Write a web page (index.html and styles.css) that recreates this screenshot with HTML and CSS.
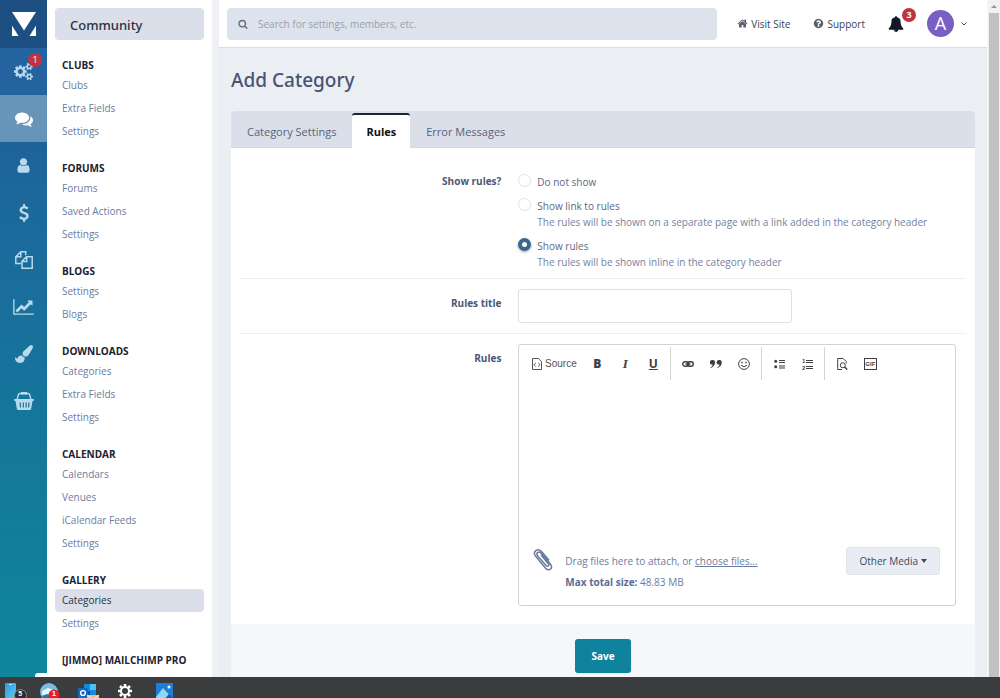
FILE: index.html
```html
<!DOCTYPE html>
<html lang="en">
<head>
<meta charset="utf-8">
<title>Add Category</title>
<link rel="stylesheet" href="styles.css">
</head>
<body>
<div class="app">
  <nav class="rail" aria-label="Sections">
    <a class="rail-logo" href="#" aria-label="Home"><svg width="24" height="24" viewBox="0 0 24 24"><path d="M0 0h24L12 18.500z"/><path d="M0 13.500L6.500 24H0zM24 13.500L17.500 24H24z"/></svg></a>
    <a class="rail-item rail-system" href="#" aria-label="System"><svg width="19" height="19" viewBox="0 0 1920 1792"><path d="M896 896q0-106-75-181t-181-75-181 75-75 181 75 181 181 75 181-75 75-181zm768 512q0-52-38-90t-90-38-90 38-38 90q0 53 37.500 90.500t90.500 37.500 90.500-37.500 37.500-90.500zm0-1024q0-52-38-90t-90-38-90 38-38 90q0 53 37.500 90.500t90.500 37.500 90.500-37.500 37.500-90.500zm-384 421v185q0 10-7 19.500t-16 10.500l-155 24q-11 35-32 76 34 48 90 115 7 11 7 20 0 12-7 19-23 30-82.500 89.500t-78.500 59.500q-11 0-21-7l-115-90q-37 19-77 31-11 108-23 155-7 24-30 24h-186q-11 0-20-7.500t-10-17.500l-23-153q-34-10-75-31l-118 89q-7 7-20 7-11 0-21-8-144-133-144-160 0-9 7-19 10-14 41-53t47-61q-23-44-35-82l-152-24q-10-1-17-9.500t-7-19.500v-185q0-10 7-19.500t16-10.500l155-24q11-35 32-76-34-48-90-115-7-11-7-20 0-12 7-20 22-30 82-89t79-59q11 0 21 7l115 90q34-18 77-32 11-108 23-154 7-24 30-24h186q11 0 20 7.500t10 17.500l23 153q34 10 75 31l118-89q8-7 20-7 11 0 21 8 144 133 144 160 0 8-7 19-12 16-42 54t-45 60q23 48 34 82l152 23q10 2 17 10.500t7 19.500zm640 533v140q0 16-149 31-12 27-30 52 51 113 51 138 0 4-4 7-122 71-124 71-8 0-46-47t-52-68q-20 2-30 2t-30-2q-14 21-52 68t-46 47q-2 0-124-71-4-3-4-7 0-25 51-138-18-25-30-52-149-15-149-31v-140q0-16 149-31 13-29 30-52-51-113-51-138 0-4 4-7 4-2 35-20t59-34 30-16q8 0 46 46.500t52 67.500q20-2 30-2t30 2q51-71 92-112l6-2q4 0 124 70 4 3 4 7 0 25-51 138 17 23 30 52 149 15 149 31zm0-1024v140q0 16-149 31-12 27-30 52 51 113 51 138 0 4-4 7-122 71-124 71-8 0-46-47t-52-68q-20 2-30 2t-30-2q-14 21-52 68t-46 47q-2 0-124-71-4-3-4-7 0-25 51-138-18-25-30-52-149-15-149-31v-140q0-16 149-31 13-29 30-52-51-113-51-138 0-4 4-7 4-2 35-20t59-34 30-16q8 0 46 46.500t52 67.500q20-2 30-2t30 2q51-71 92-112l6-2q4 0 124 70 4 3 4 7 0 25-51 138 17 23 30 52 149 15 149 31z"/></svg><span class="badge badge-rail">1</span></a>
    <a class="rail-item is-active" href="#" aria-label="Community"><svg width="18" height="18" viewBox="0 0 1792 1792"><path d="M1408 768q0 139-94 257t-256.500 186.500-353.500 68.500q-86 0-176-16-124 88-278 128-36 9-86 16h-3q-11 0-20.500-8t-11.500-21q-1-3-1-6.500t.5-6.500 2-6l2.500-5 3.500-5.500 4-5 4.500-5 4-4.500q5-6 23-25t26-29.500 22.500-29 25-38.500 20.500-44q-124-72-195-177t-71-224q0-139 94-257t256.500-186.500 353.500-68.500 353.500 68.500 256.500 186.500 94 257zm384 256q0 120-71 224.500t-195 176.500q10 24 20.500 44t25 38.500 22.500 29 26 29.500 23 25q1 1 4 4.500t4.500 5 4 5 3.500 5.500l2.500 5 2 6 .5 6.500-1 6.500q-3 14-13 22t-22 7q-50-7-86-16-154-40-278-128-90 16-176 16-271 0-472-132 58 4 88 4 161 0 309-45t264-129q125-92 192-212t67-254q0-77-23-152 129 71 204 178t75 230z"/></svg></a>
    <a class="rail-item" href="#" aria-label="Members"><svg width="17" height="17" viewBox="0 0 1792 1792"><path d="M1536 1399q0 109-62.500 187t-150.500 78h-854q-88 0-150.500-78t-62.500-187q0-85 8.500-160.500t31.500-152 58.500-131 94-89 134.500-34.500q131 128 313 128t313-128q76 0 134.500 34.500t94 89 58.500 131 31.500 152 8.500 160.500zm-256-887q0 159-112.500 271.500t-271.500 112.500-271.500-112.500-112.500-271.500 112.500-271.500 271.500-112.500 271.500 112.500 112.500 271.500z"/></svg></a>
    <a class="rail-item" href="#" aria-label="Commerce"><svg width="18" height="18" viewBox="0 0 1792 1792"><path d="M1362 1185q0 153-99.500 263.500t-258.500 136.500v175q0 14-9 23t-23 9h-135q-13 0-22.500-9.500t-9.500-22.500v-175q-66-9-127.500-31t-101.500-44.500-74-48-46.500-37.500-17.500-18q-17-21-2-41l103-135q7-10 23-12 15-2 24 9l2 2q113 99 243 125 37 8 74 8 81 0 142.500-43t61.500-122q0-28-15-53t-33.500-42-58.500-37.500-66-32-80-32.500q-39-16-61.500-25t-61.500-26.500-62.500-31-56.500-35.500-53.500-42.500-43.500-49-35.500-58-21-66.500-8.500-78q0-138 98-242t255-134v-180q0-13 9.500-22.500t22.500-9.500h135q14 0 23 9t9 23v176q57 6 110.500 23t87 33.500 63.500 37.500 39 29 15 14q17 18 5 38l-81 146q-8 15-23 16-14 3-27-7-3-3-14.500-12t-39-26.500-58.500-32-74.500-26-85.500-11.500q-95 0-155 43t-60 111q0 26 8.500 48t29.500 41.500 39.500 33 56 31 60.500 27 70 27.500q53 20 81 31.500t76 35 75.500 42.500 62 50 53 63.500 31.500 76.500 13 94z"/></svg></a>
    <a class="rail-item" href="#" aria-label="Pages"><svg class="line-icon" width="18" height="18" viewBox="0 0 18 18" stroke-width="1.500"><path d="M6 12.500H.8V5.800L5.800.8h4.900v3.500M5.800.8v5H.8M7 10.300l4.500-4.500h5.700v11.400H7zM11.700 5.800v4.700H7"/></svg></a>
    <a class="rail-item" href="#" aria-label="Statistics"><svg width="21" height="18" viewBox="0 0 2048 1792"><path d="M2048 1536v128H0V128h128v1408h1920zM1920 288v435q0 21-19.500 29.500T1865 745l-121-121-633 633q-10 10-23 10t-23-10L832 1024l-416 416-192-192 585-585q10-10 23-10t23 10l233 233 464-464-121-121q-16-16-7.500-35.500T1453 256h435q14 0 23 9t9 23z"/></svg></a>
    <a class="rail-item" href="#" aria-label="Customization"><svg width="18" height="18" viewBox="0 0 1792 1792"><path d="M1615 0q70 0 122.500 46.500t52.500 116.500q0 63-45 151-332 629-465 752-97 91-218 91-126 0-216.500-92.500t-90.500-219.500q0-128 92-212l638-579q59-54 130-54zm-909 1034q39 76 106.500 130t150.500 76l1 71q4 213-129.500 347t-348.500 134q-123 0-218-46.500t-152.500-127.500-86.500-183-29-220q7 5 41 30t62 44.500 59 36.500 46 17q41 0 55-37 25-66 57.500-112.500t69.500-76 88-47.500 103-25.500 125-10.500z"/></svg></a>
    <a class="rail-item" href="#" aria-label="Marketplace"><svg width="20" height="18" viewBox="0 0 20 18"><path fill-rule="evenodd" d="M1 7h18q1 0 1 1t-1 1h-.500l-1.400 8q-.2 1-1.200 1H4.100q-1 0-1.200-1L1.500 9H1q-1 0-1-1t1-1zm4.500 3.500l.4 5h1.200l-.4-5zm3.200 0v5h1.200v-5zm2.900 0v5h1.200v-5zm2.800 0l-.4 5h1.200l.4-5z"/><path fill="none" stroke="currentColor" stroke-width="1.400" d="M3 7.500l1.500-5Q4.800 1.500 6 1.500h8q1.200 0 1.500 1l1.500 5"/><path d="M7 0h6v2.600H7z"/></svg></a>
  </nav>

  <aside class="menu">
    <h2 class="menu-title">Community</h2>
    <section class="group"><h3>CLUBS</h3><a href="#">Clubs</a><a href="#">Extra Fields</a><a href="#">Settings</a></section>
    <section class="group"><h3>FORUMS</h3><a href="#">Forums</a><a href="#">Saved Actions</a><a href="#">Settings</a></section>
    <section class="group"><h3>BLOGS</h3><a href="#">Settings</a><a href="#">Blogs</a></section>
    <section class="group"><h3>DOWNLOADS</h3><a href="#">Categories</a><a href="#">Extra Fields</a><a href="#">Settings</a></section>
    <section class="group"><h3>CALENDAR</h3><a href="#">Calendars</a><a href="#">Venues</a><a href="#">iCalendar Feeds</a><a href="#">Settings</a></section>
    <section class="group"><h3>GALLERY</h3><a class="is-current" href="#">Categories</a><a href="#">Settings</a></section>
    <section class="group"><h3>[JIMMO] MAILCHIMP PRO</h3></section>
  </aside>

  <div class="page">
    <header class="topbar">
      <label class="search">
        <svg width="10" height="10" viewBox="0 0 1792 1792"><path d="M1216 832q0-185-131.500-316.500t-316.500-131.500-316.500 131.500-131.500 316.500 131.500 316.500 316.500 131.500 316.500-131.500 131.500-316.500zm512 832q0 52-38 90t-90 38q-54 0-90-38l-343-342q-179 124-399 124-143 0-273.500-55.500t-225-150-150-225-55.500-273.500 55.500-273.500 150-225 225-150 273.500-55.500 273.500 55.500 225 150 150 225 55.500 273.500q0 220-124 399l343 343q37 37 37 90z"/></svg>
        <input type="search" placeholder="Search for settings, members, etc." aria-label="Search">
      </label>
      <a class="top-link" href="#"><svg width="11" height="11" viewBox="0 0 1792 1792"><path d="M1472 992v480q0 26-19 45t-45 19h-384v-384h-256v384h-384q-26 0-45-19t-19-45v-480q0-1 .5-3t.5-3l575-474 575 474q1 2 1 6zm223-69l-62 74q-8 9-21 11h-3q-13 0-21-7l-692-577-692 577q-12 8-24 7-13-2-21-11l-62-74q-8-10-7-23.500t11-21.500l719-599q32-26 76-26t76 26l244 204v-195q0-14 9-23t23-9h192q14 0 23 9t9 23v408l219 182q10 8 11 21.500t-7 23.500z"/></svg>Visit Site</a>
      <a class="top-link" href="#"><svg width="11" height="11" viewBox="0 0 1792 1792"><path d="M1024 1376v-192q0-14-9-23t-23-9h-192q-14 0-23 9t-9 23v192q0 14 9 23t23 9h192q14 0 23-9t9-23zm256-672q0-88-55.500-163t-138.500-116-170-41q-243 0-371 213-15 24 8 42l132 100q7 6 19 6 16 0 25-12 53-68 86-92 34-24 86-24 48 0 85.500 26t37.500 59q0 38-20 61t-68 45q-63 28-115.500 86.500t-52.500 125.500v36q0 14 9 23t23 9h192q14 0 23-9t9-23q0-19 21.500-49.500t54.500-49.500q32-18 49-28.500t46-35 44.500-48 28-60.500 12.500-81zm384 192q0 209-103 385.500t-279.500 279.500-385.500 103-385.500-103-279.500-279.500-103-385.500 103-385.500 279.500-279.500 385.500-103 385.500 103 279.500 279.500 103 385.500z"/></svg>Support</a>
      <button class="bell" type="button" aria-label="Notifications"><svg width="16" height="16" viewBox="0 0 1792 1792"><path d="M912 1696q0-16-16-16-59 0-101.500-42.500t-42.500-101.500q0-16-16-16t-16 16q0 73 51.500 124.500t124.500 51.500q16 0 16-16zm816-288q0 52-38 90t-90 38h-448q0 106-75 181t-181 75-181-75-75-181h-448q-52 0-90-38t-38-90q50-42 91-88t85-119.500 74.500-158.500 50-206 19.500-260q0-152 117-282.500t307-158.500q-8-19-8-39 0-40 28-68t68-28 68 28 28 68q0 20-8 39 190 28 307 158.500t117 282.500q0 139 19.500 260t50 206 74.500 158.500 85 119.500 91 88z"/></svg><span class="badge badge-bell">3</span></button>
      <button class="account" type="button" aria-label="Account"><span class="avatar">A</span><svg class="line-icon" width="6" height="4" viewBox="0 0 6 4"><path d="M.5.500L3 3 5.500.500"/></svg></button>
    </header>

    <main class="content">
      <h1>Add Category</h1>
      <form class="panel">
        <div class="tabs" role="tablist">
          <button type="button" role="tab" aria-selected="false">Category Settings</button>
          <button class="is-selected" type="button" role="tab" aria-selected="true">Rules</button>
          <button type="button" role="tab" aria-selected="false">Error Messages</button>
        </div>
        <div class="rows">
          <div class="row" role="radiogroup" aria-labelledby="show-label">
            <span class="row-label" id="show-label">Show rules?</span>
            <div class="options">
              <label class="option"><input type="radio" name="show"><span>Do not show</span></label>
              <label class="option"><input type="radio" name="show"><span>Show link to rules<small>The rules will be shown on a separate page with a link added in the category header</small></span></label>
              <label class="option"><input type="radio" name="show" checked><span>Show rules<small>The rules will be shown inline in the category header</small></span></label>
            </div>
          </div>
          <div class="row">
            <label class="row-label" for="rules-title">Rules title</label>
            <input class="text-field" id="rules-title" type="text">
          </div>
          <div class="row">
            <label class="row-label" for="rules-body">Rules</label>
            <div class="editor">
              <div class="toolbar">
                <div class="tool-group">
                  <button class="tool-source" type="button"><svg class="line-icon" width="10" height="12" viewBox="0 0 10 12"><path d="M.5.500h5.800l3.200 3V11.500H.5zM3.800 5L2 6.800l1.800 1.800M6.200 5L8 6.800 6.200 8.600"/></svg>Source</button>
                  <button class="tool-b" type="button">B</button>
                  <button class="tool-i" type="button">I</button>
                  <button class="tool-u" type="button">U</button>
                </div>
                <div class="tool-group">
                  <button type="button" aria-label="Link"><svg class="line-icon" width="12" height="6" viewBox="0 0 12 6" stroke-width="1.400"><rect x=".7" y=".7" width="6" height="4.600" rx="2.300"/><rect x="5.300" y=".7" width="6" height="4.600" rx="2.300"/><path d="M3.500 3h5"/></svg></button>
                  <button type="button" aria-label="Quote"><svg width="12" height="8" viewBox="0 0 12 8"><path d="M2.500 0A2.400 2.400 0 0 1 5 2.600C5 5 3.500 7 .8 8L.5 7.200C2 6.500 2.700 5.600 2.800 4.700A2.400 2.400 0 1 1 2.500 0zM9.300 0a2.400 2.400 0 0 1 2.500 2.600c0 2.400-1.500 4.400-4.200 5.400l-.3-.8c1.500-.7 2.200-1.600 2.300-2.500A2.400 2.400 0 1 1 9.300 0z"/></svg></button>
                  <button type="button" aria-label="Emoji"><svg class="line-icon" width="12" height="12" viewBox="0 0 12 12"><circle cx="6" cy="6" r="5.400"/><path d="M3 7.300q3 3 6 0"/><path stroke-width="1.500" d="M4 3.800v1.500M8 3.800v1.500"/></svg></button>
                </div>
                <div class="tool-group">
                  <button type="button" aria-label="Bulleted list"><svg width="11" height="10" viewBox="0 0 11 10"><circle cx="1.700" cy="2.200" r="1.500"/><circle cx="1.700" cy="7.700" r="1.500"/><path d="M5 1h6v1H5zM5 3h6v1H5zM5 6.500h6v1H5zM5 8.500h6v1H5z"/></svg></button>
                  <button type="button" aria-label="Numbered list"><svg width="11" height="12" viewBox="0 0 11 12"><text x="0" y="5" font-size="6">1</text><text x="0" y="12" font-size="6">2</text><path d="M4 2h7v1H4zM4 4h7v1H4zM4 8h7v1H4zM4 10h7v1H4z"/></svg></button>
                </div>
                <div class="tool-group">
                  <button type="button" aria-label="Preview"><svg class="line-icon" width="11" height="12" viewBox="0 0 11 12"><path d="M5 11.500H.7V.500h5.500l3 3v2"/><circle cx="5.800" cy="7.300" r="2.500"/><path stroke-width="1.500" d="M7.600 9l2.600 2.500"/></svg></button>
                  <button type="button"><span class="gif">GIF</span></button>
                </div>
              </div>
              <textarea id="rules-body"></textarea>
              <div class="attach">
                <svg class="line-icon clip" width="20" height="22" viewBox="0 0 20 22" stroke-width="1.500"><path d="M8 6l7.300 8.700q1 1.400 0 2.300-1.200.8-2.300-.4L4.500 6.700q-1.400-2 .2-3.300 1.700-1.200 3.300.6l9.500 11.200q2.200 3-.1 4.900-2.500 1.700-4.800-.9L2.300 6.900Q.2 3.700 2.800 1.600 5.900-.3 8.500 2.500l7.500 8.800"/></svg>
                <div class="attach-text">
                  <p>Drag files here to attach, or <a href="#">choose files...</a></p>
                  <p><strong>Max total size:</strong> 48.83 MB</p>
                </div>
                <button class="other" type="button">Other Media<i class="caret"></i></button>
              </div>
            </div>
          </div>
        </div>
        <div class="panel-foot"><button class="save" type="submit">Save</button></div>
      </form>
    </main>
  </div>

  <div class="scrollbar" aria-hidden="true"><i></i><span></span></div>
  <div class="hint" aria-hidden="true"></div>
</div>

<footer class="taskbar">
  <button class="task" type="button" aria-label="Your Phone"><svg width="23" height="15" viewBox="0 0 23 15"><defs><linearGradient id="phone" x2="1" y2="1"><stop stop-color="#2e9bdf"/><stop offset="1" stop-color="#5cc8f2"/></linearGradient></defs><rect width="11" height="15" rx="1" fill="url(#phone)"/><path d="M4 1h3v1H4z" fill="#bfe7fa"/><circle cx="15.500" cy="12.500" r="6" fill="#2b2b2c" stroke="#8a8a8a"/><text x="13.200" y="13" font-size="7" font-weight="700" fill="#fff">5</text></svg></button>
  <button class="task" type="button" aria-label="Mail"><svg width="26" height="15" viewBox="0 0 26 15"><circle cx="9" cy="9" r="9" fill="#79bce8"/><path d="M2 8l6-3 8 3 1 3-6-1-5 3-4-1z" fill="#e9f5fd"/><path d="M2 13l5-2 5 2v5H4z" fill="#2278b5"/><circle cx="14" cy="12" r="5.500" fill="#e3212b"/><text x="12" y="13" font-size="7" font-weight="700" fill="#fff">1</text></svg></button>
  <button class="task" type="button" aria-label="Outlook"><svg width="26" height="15" viewBox="0 0 26 15"><path d="M6 1h12v13H6z" fill="#1689df"/><path d="M12 1h6v6h-6z" fill="#48c3f4"/><path d="M6 8h6v6H6z" fill="#0758a8"/><rect y="5" width="10" height="10" rx="1" fill="#0f6cbd"/><circle cx="5" cy="10" r="2.400" fill="none" stroke="#fff" stroke-width="1.400"/><path d="M9 12h12v6H9z" fill="#e7c08d"/><path d="M9 12l6 4 6-4" fill="none" stroke="#f8ead5"/></svg></button>
  <button class="task" type="button" aria-label="Settings"><svg width="26" height="15" viewBox="0 0 26 15" stroke="#fff"><circle fill="none" cx="9" cy="8" r="4" stroke-width="2"/><path fill="none" stroke-width="2.600" d="M9 1v2.500M9 12.500V15M2 8h2.500M13.500 8H16M4 3l1.800 1.800M12.200 11.200L14 13M14 3l-1.800 1.800M5.800 11.200L4 13"/></svg></button>
  <button class="task" type="button" aria-label="Photos"><svg width="26" height="15" viewBox="0 0 26 15"><rect x="2" width="17" height="18" rx="1" fill="#1d7dd8"/><path d="M2 14L9 5l10 11v2H2z" fill="#8fd6f7"/><path d="M9 18l6-7 4 4v3z" fill="#155ca8"/><circle cx="15" cy="4" r="1.500" fill="#fff"/></svg></button>
</footer>
</body>
</html>
```
FILE: styles.css
```css
* { box-sizing: border-box; }
body {
  margin: 0;
  height: 100vh;
  display: flex;
  flex-direction: column;
  overflow: hidden;
  background: #ebeff4;
  color: #4a5878;
  font: 10px/16px "Open Sans", "Noto Sans", sans-serif;
}
a { color: inherit; text-decoration: none; }
h1, h2, h3, p { margin: 0; }
button, input, textarea { font: inherit; color: inherit; }
button { border: 0; padding: 0; background: none; }
svg { display: block; flex: none; fill: currentColor; }
.line-icon { fill: none; stroke: currentColor; }

.app { position: relative; flex: 1; min-height: 0; display: flex; }

.rail { width: 47px; flex: none; background: linear-gradient(#21579a, #1b6b9b 35%, #0e869b); }
.rail-logo, .rail-item { position: relative; display: flex; align-items: center; justify-content: center; height: 47px; }
.rail-logo { height: 48px; background: #1d4f82; color: #fff; }
.rail-item { color: #b9d9ec; }
.rail-system { background: #2463a0; }
.rail-item.is-active { background: #6795ba; color: #fff; }

.badge {
  position: absolute;
  display: flex;
  align-items: center;
  justify-content: center;
  width: 14px;
  height: 14px;
  border-radius: 50%;
  background: #bd363d;
  color: #fff;
  font-size: 9px;
  line-height: 14px;
}
.badge-rail { top: 5px; right: 5px; }
.badge-bell { top: -8px; right: -12px; font-weight: 700; }

.menu { width: 172px; flex: none; overflow: hidden; padding: 8px 8px 0; background: #fff; border-right: 7px solid #f0f1f4; }
.menu-title { height: 32px; margin-bottom: 15px; padding: 0 15px; border-radius: 4px; background: #dadfea; color: #2b3140; font: 500 13px/34px "Noto Sans", sans-serif; }
.group { margin-bottom: 15px; }
.group h3 { padding: 2px 0 0 7px; color: #1c212e; font-size: 10px; line-height: 17px; font-weight: 700; white-space: nowrap; }
.group a { display: block; height: 23px; padding-left: 7px; border-radius: 4px; color: #6b7b9f; line-height: 23px; }
.group a.is-current { background: #dadfea; color: #2b3140; }

.page { flex: 1; min-width: 0; display: flex; flex-direction: column; }
.topbar { display: flex; align-items: center; height: 48px; flex: none; padding: 0 20px 0 8px; background: #fff; border-bottom: 1px solid #d9dee5; color: #3c4352; }
.search { flex: 1; display: flex; align-items: center; gap: 10px; height: 32px; margin-right: 20px; padding: 0 12px 0 11px; border-radius: 4px; background: #dce3ec; color: #67707f; }
.search input { flex: 1; min-width: 0; border: 0; padding: 0; background: none; outline: 0; }
.search input::placeholder { color: #98a1af; opacity: 1; }
.top-link { display: flex; align-items: center; gap: 3px; margin-right: 23px; white-space: nowrap; }
.top-link svg { color: #59606d; }
.bell { position: relative; margin-right: 23px; color: #111827; }
.account { display: flex; align-items: center; gap: 7px; }
.avatar { width: 27px; height: 27px; border-radius: 50%; background: #7a5fc3; color: #fff; font-size: 18px; line-height: 27px; }

.content { flex: 1; min-height: 0; overflow: hidden; padding: 17px 12px 0; }
h1 { margin-bottom: 16px; color: #465475; font: 500 19px/30px "Noto Sans", sans-serif; }
.panel { background: #fff; border-radius: 4px; }
.tabs { display: flex; height: 37px; padding-top: 2px; border-radius: 4px 4px 0 0; background: #dadfea; border-bottom: 1px solid #d0d6e2; color: #59627a; font-size: 11px; }
.tabs button { padding: 3px 16px 0; }
.tabs .is-selected { margin-bottom: -1px; padding: 1px 14px 0; border-top: 2px solid #1c2533; border-radius: 3px 3px 0 0; background: #fff; color: #111; font-weight: 700; }

.rows { padding: 0 9px 8px; }
.row { display: grid; grid-template-columns: 36% 1fr; column-gap: 17px; padding: 10px 0; border-bottom: 1px solid #edf0f4; }
.row:first-child { padding-top: 25px; padding-bottom: 8px; }
.row:last-child { border-bottom: 0; }
.row-label { padding-top: 6px; text-align: right; font-weight: 700; }
.row:first-child .row-label { padding-top: 0; }
.options { display: flex; flex-direction: column; gap: 7px; }
.option { display: flex; gap: 6px; color: #5b6783; }
.option span { padding-top: 1px; }
.option input { appearance: none; flex: none; width: 13px; height: 13px; margin: 1px 0 0; border: 1px solid #dde1ea; border-radius: 50%; background: #fff; }
.option input:checked { border: 4px solid #3d6788; box-shadow: 0 1px 3px #9aa7b8; }
.option small { display: block; font-size: 10px; color: #7482a0; }
.text-field { width: 274px; max-width: 100%; height: 34px; padding: 0 8px; border: 1px solid #dce0e8; border-radius: 3px; background: #fff; }

.editor { margin-right: 10px; border: 1px solid #cfd2d7; border-radius: 3px; }
.toolbar { display: flex; padding: 2px 3px 0; color: #3f3f3f; }
.tool-group { display: flex; align-items: center; height: 33px; padding: 0 3px; border-right: 1px solid #d2d4d8; }
.tool-group:last-child { border-right: 0; }
.tool-group button { display: flex; align-items: center; justify-content: center; width: 28px; height: 28px; font: 600 12px "Open Sans", sans-serif; }
.toolbar text { font-family: "Liberation Sans", sans-serif; }
.tool-group .tool-source { gap: 3px; width: 58px; font: 10px "Liberation Sans", sans-serif; color: #555; }
.tool-group .tool-b { font-weight: 800; }
.tool-group .tool-i { font: italic 700 13px "Liberation Serif", serif; }
.tool-group .tool-u { font-weight: 700; text-decoration: underline; }
.gif { border: 1px solid currentColor; width: 13px; height: 12px; font: 700 6px/10px "Liberation Sans", sans-serif; }
.editor textarea { display: block; width: 100%; height: 160px; padding: 8px 12px; border: 0; background: none; resize: none; outline: 0; }
.attach { display: flex; align-items: flex-start; padding: 7px 15px 12px 14px; color: #6b7b9f; }
.clip { margin: 2px 12px 0 0; color: #6b7b9f; }
.attach-text { flex: 1; padding-top: 4px; }
.attach-text p { line-height: 21px; }
.attach-text a { text-decoration: underline; }
.attach-text strong { color: #5d6c96; }
.other { display: flex; align-items: center; gap: 3px; height: 28px; padding: 0 12px; border: 1px solid #dfe3ea; border-radius: 3px; background: #e9edf3; color: #404a5e; }
.caret { border: 3px solid transparent; border-top: 4px solid currentColor; border-bottom: 0; }

.panel-foot { display: flex; justify-content: center; padding: 15px 0; background: #f5f7fa; }
.save { width: 56px; height: 34px; border-radius: 3px; background: #0f829e; color: #fff; font-weight: 700; }

.scrollbar { width: 13px; flex: none; display: flex; flex-direction: column; align-items: center; background: #f1f1f1; border-left: 1px solid #f7f8fa; }
.scrollbar i { margin: 5px 0 5px; border: 3px solid transparent; border-top: 0; border-bottom: 3px solid #999; }
.scrollbar span { flex: 1; width: 10px; background: #c1c1c1; }
.hint { position: absolute; left: 35px; bottom: 0; width: 14px; height: 4px; border-radius: 3px 0 0 0; background: #fff; }

.taskbar { height: 21px; flex: none; display: flex; gap: 12px; overflow: hidden; padding: 6px 5px 0; background: #3b3c3e; }
.task { flex: none; align-self: flex-start; }
.taskbar text { font-family: "Liberation Sans", sans-serif; }
```
